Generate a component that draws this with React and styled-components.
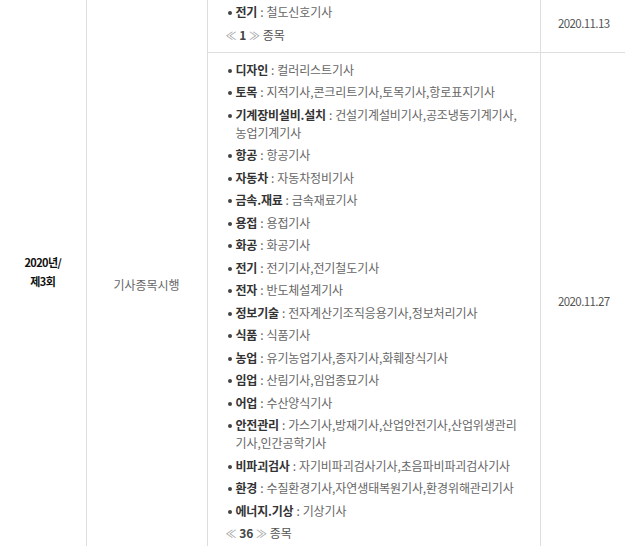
import React from "react";
import styled, { createGlobalStyle } from "styled-components";

const GlobalStyle = createGlobalStyle`
  html, body {
    margin: 0;
    padding: 0;
    background: #fff;
  }
  body {
    font-family: "Noto Sans CJK KR", "Noto Sans", sans-serif;
    overflow: hidden;
  }
`;

const schedule = {
  round: ["2020년/", "제3회"],
  kind: "기사종목시행",
  groups: [
    {
      date: "2020.11.13",
      total: 1,
      items: [{ field: "전기", names: "철도신호기사" }],
    },
    {
      date: "2020.11.27",
      total: 36,
      items: [
        { field: "디자인", names: "컬러리스트기사" },
        { field: "토목", names: "지적기사,콘크리트기사,토목기사,항로표지기사" },
        { field: "기계장비설비.설치", names: "건설기계설비기사,공조냉동기계기사,농업기계기사" },
        { field: "항공", names: "항공기사" },
        { field: "자동차", names: "자동차정비기사" },
        { field: "금속.재료", names: "금속재료기사" },
        { field: "용접", names: "용접기사" },
        { field: "화공", names: "화공기사" },
        { field: "전기", names: "전기기사,전기철도기사" },
        { field: "전자", names: "반도체설계기사" },
        { field: "정보기술", names: "전자계산기조직응용기사,정보처리기사" },
        { field: "식품", names: "식품기사" },
        { field: "농업", names: "유기농업기사,종자기사,화훼장식기사" },
        { field: "임업", names: "산림기사,임업종묘기사" },
        { field: "어업", names: "수산양식기사" },
        { field: "안전관리", names: "가스기사,방재기사,산업안전기사,산업위생관리기사,인간공학기사" },
        { field: "비파괴검사", names: "자기비파괴검사기사,초음파비파괴검사기사" },
        { field: "환경", names: "수질환경기사,자연생태복원기사,환경위해관리기사" },
        { field: "에너지.기상", names: "기상기사" },
      ],
    },
  ],
};

const Viewport = styled.div`
  width: 625px;
  height: 546px;
  overflow: hidden;
`;

const Table = styled.table`
  width: 625px;
  margin-top: -7px;
  border-collapse: collapse;
  table-layout: fixed;
  font-size: 12px;
`;

const Cell = styled.td`
  border: 1px solid #dedede;
  padding: 0;
  vertical-align: middle;
  text-align: center;
  &:first-child {
    border-left: none;
  }
  &:last-child {
    border-right: none;
  }
`;

const RoundCell = styled(Cell)`
  color: #111;
  font-weight: bold;
  font-size: 11px;
  letter-spacing: -0.6px;
  line-height: 19px;
`;

const KindCell = styled(Cell)`
  color: #666;
  padding-top: 24px;
`;

const ListCell = styled(Cell)`
  text-align: left;
  vertical-align: top;
  padding: ${(p) => (p.$first ? "9px" : "8px")} 20px 8px 18px;
`;

const DateCell = styled(Cell)`
  color: #555;
  font-size: 11.5px;
  letter-spacing: -0.6px;
  padding-left: 2px;
`;

const List = styled.ul`
  margin: 0;
  padding: 0 0 0 10px;
  list-style: none;
`;

const Item = styled.li`
  position: relative;
  color: #666;
  line-height: 18px;
  margin-bottom: 4.5px;
  letter-spacing: -0.1px;
  &::before {
    content: "";
    position: absolute;
    left: -8px;
    top: 8px;
    width: 4px;
    height: 4px;
    border-radius: 50%;
    background: #444;
  }
`;

const Field = styled.b`
  color: #333;
  font-weight: bold;
  letter-spacing: -0.2px;
`;

const Sep = styled.span`
  color: #666;
  margin: 0 3px;
`;

const Pager = styled.div`
  color: #555;
  line-height: 18px;
  & span {
    color: #999;
    font-size: 11px;
  }
  & b {
    color: #444;
  }
`;

const Summary = ({ total }) => (
  <Pager>
    <span>≪</span> <b>{total}</b> <span>≫</span> 종목
  </Pager>
);

export default function App() {
  const [first, second] = schedule.groups;
  const renderList = (group, isFirst) => (
    <ListCell $first={isFirst}>
      <List>
        {group.items.map((it, i) => (
          <Item key={i}>
            <Field>{it.field}</Field>
            <Sep>:</Sep>
            {it.names}
          </Item>
        ))}
      </List>
      <Summary total={group.total} />
    </ListCell>
  );
  return (
    <Viewport>
      <GlobalStyle />
      <Table>
        <colgroup>
          <col style={{ width: 86 }} />
          <col style={{ width: 121 }} />
          <col style={{ width: 333 }} />
          <col style={{ width: 85 }} />
        </colgroup>
        <tbody>
          <tr>
            <RoundCell rowSpan={2}>
              {schedule.round[0]}
              <br />
              {schedule.round[1]}
            </RoundCell>
            <KindCell rowSpan={2}>{schedule.kind}</KindCell>
            {renderList(first, true)}
            <DateCell>{first.date}</DateCell>
          </tr>
          <tr>
            {renderList(second, false)}
            <DateCell>{second.date}</DateCell>
          </tr>
        </tbody>
      </Table>
    </Viewport>
  );
}
